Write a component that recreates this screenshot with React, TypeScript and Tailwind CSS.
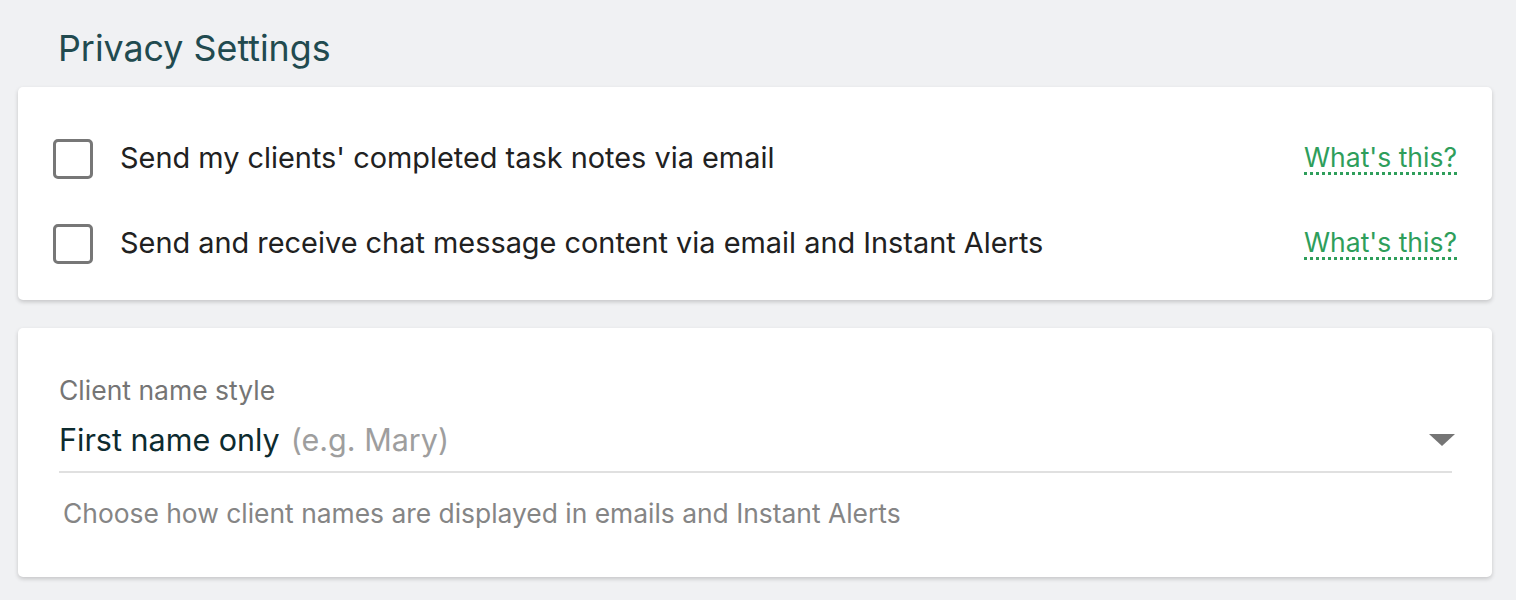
import React from "react";

function Checkbox() {
  return <div className="w-[40px] h-[40px] rounded-[5px] border-[3px] border-[#777777] shrink-0" />;
}

function Row({ label }: { label: string }) {
  return (
    <div className="flex items-center h-[40px]">
      <div className="ml-[35px]"><Checkbox /></div>
      <span className="ml-[27px] text-[28.9px] text-[#212121] leading-none -mt-[2px]">{label}</span>
      <a className="ml-auto mr-[35px] text-[26.5px] text-[#2e9e5b] leading-[30px] border-b-[3px] border-dotted border-[#2e9e5b] -mt-[2px]">What's this?</a>
    </div>
  );
}

export default function App() {
  return (
    <div className="w-[1516px] h-[600px] bg-[#f0f1f3] overflow-hidden" style={{ fontFamily: "Inter, 'Noto Sans', sans-serif" }}>
      <div className="pl-[58px] pt-[26px] h-[87px]">
        <h1 className="text-[35.8px] leading-[44px] text-[#214a4f] font-normal">Privacy Settings</h1>
      </div>
      <div className="ml-[18px] mr-[24px] bg-white rounded-[5px] shadow-[0_2px_4px_rgba(0,0,0,0.18)] h-[213px] pt-[52px] flex flex-col gap-[45px]">
        <Row label="Send my clients' completed task notes via email" />
        <Row label="Send and receive chat message content via email and Instant Alerts" />
      </div>
      <div className="ml-[18px] mr-[24px] mt-[28px] bg-white rounded-[5px] shadow-[0_2px_4px_rgba(0,0,0,0.18)] h-[249px] pt-[46px] pl-[41px] pr-[40px]">
        <div className="text-[26.5px] leading-[32px] text-[#757575]">Client name style</div>
        <div className="flex items-center h-[65px] border-b-2 border-[#e0e0e0] mt-[2px]">
          <span className="text-[30.5px] text-[#0d2b2f]">First name only</span>
          <span className="text-[30.5px] text-[#9e9e9e] ml-[11px]">(e.g. Mary)</span>
          <svg className="ml-auto mr-[-3px]" width="26" height="12" viewBox="0 0 26 12"><polygon points="0,0 26,0 13,12" fill="#757575" /></svg>
        </div>
        <div className="mt-[24px] ml-[4px] text-[26.4px] leading-[32px] text-[#858585]">Choose how client names are displayed in emails and Instant Alerts</div>
      </div>
    </div>
  );
}
